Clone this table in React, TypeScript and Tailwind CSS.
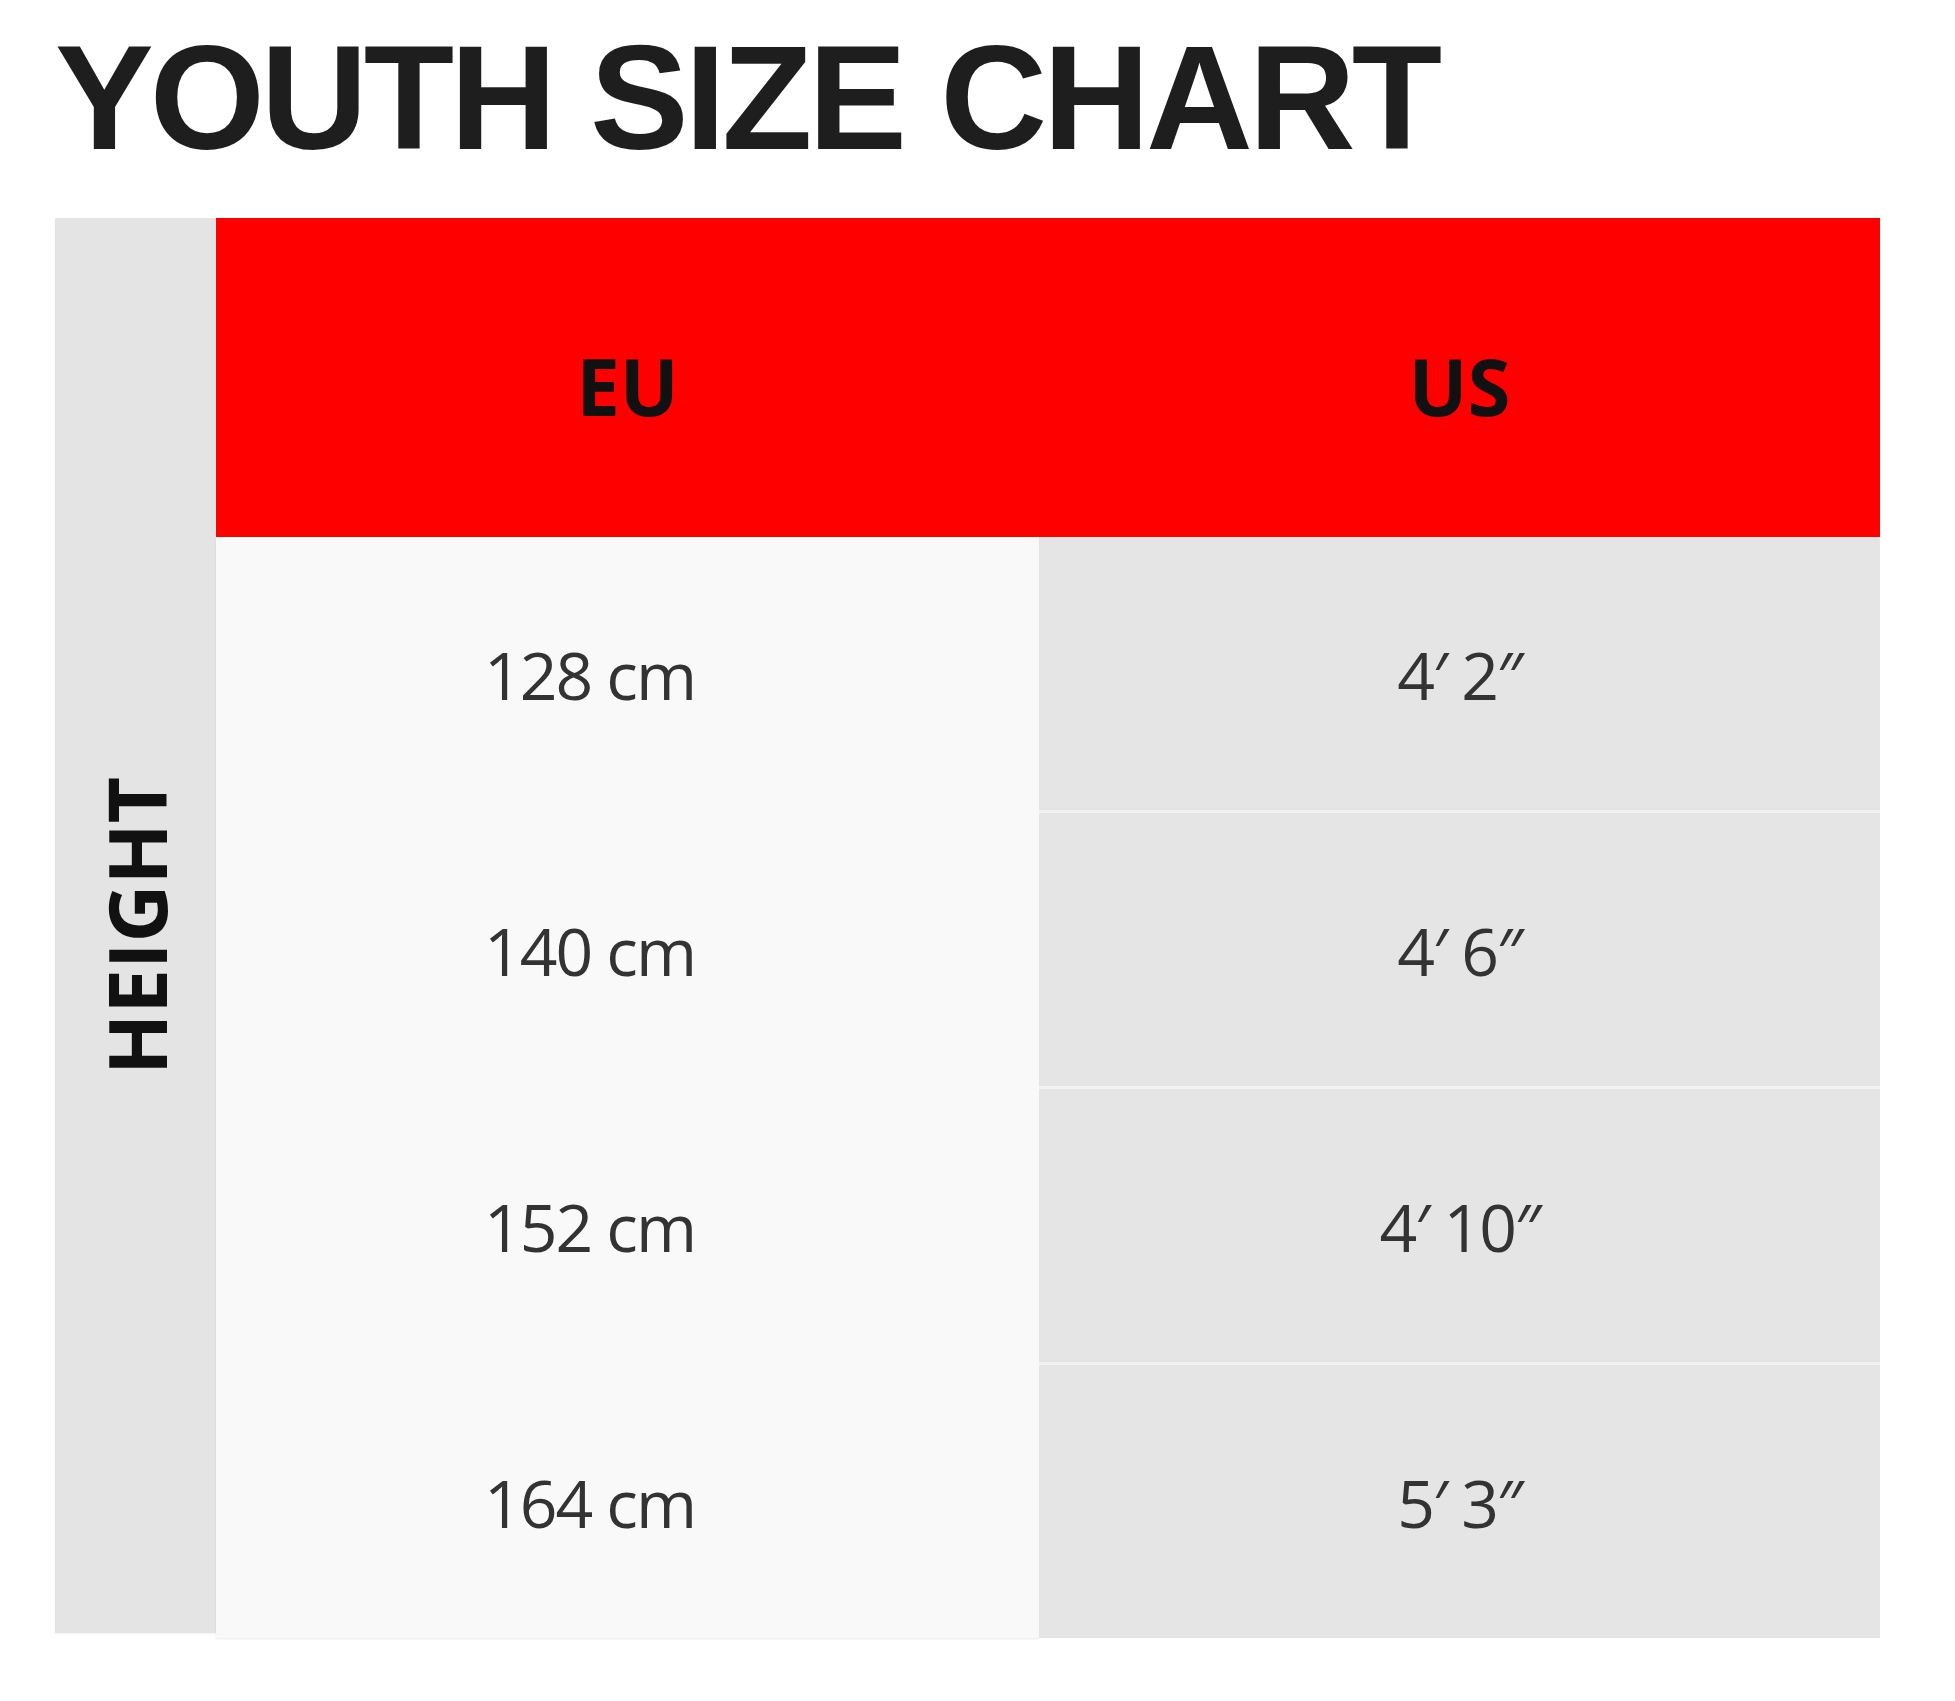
const rows = [
  { eu: "128 cm", us: "4′ 2″" },
  { eu: "140 cm", us: "4′ 6″" },
  { eu: "152 cm", us: "4′ 10″" },
  { eu: "164 cm", us: "5′ 3″" },
];

export default function App() {
  return (
    <div className="min-h-screen bg-white pt-[24px] pl-[55px]">
      <h1 className="font-['Liberation_Sans',Arial,sans-serif] text-[148px] font-bold leading-none tracking-[-4px] text-[#1e1e1e]">
        YOUTH SIZE CHART
      </h1>

      <div className="mt-[46px] flex w-[1825px] items-start font-['Open_Sans',sans-serif]">
        {/* side label */}
        <div className="flex h-[1415px] w-[161px] items-center justify-center bg-[#e4e4e4] shadow-[0_1px_2px_rgba(0,0,0,0.06)]">
          <span className="rotate-180 text-[80px] font-bold leading-none text-[#111] [writing-mode:vertical-rl]">
            HEIGHT
          </span>
        </div>

        <div className="flex flex-1 flex-col">
          {/* header */}
          <div className="grid h-[319px] grid-cols-[823px_1fr] bg-[#ff0000] text-[78px] font-bold text-[#111]">
            <div className="flex items-center justify-center pt-[18px]">EU</div>
            <div className="flex items-center justify-center pt-[18px]">US</div>
          </div>

          {/* body */}
          <div className="flex text-[66px] leading-none text-[#333]">
            <div className="flex w-[823px] flex-col gap-[3px] bg-[#f9f9f9] shadow-[0_1px_2px_rgba(0,0,0,0.08)]">
              {rows.map((r) => (
                <div key={r.eu} className="flex h-[273px] items-center justify-center pr-[76px] tracking-[-2px]">
                  {r.eu}
                </div>
              ))}
            </div>
            <div className="flex flex-1 flex-col gap-[3px] bg-[#f3f3f3]">
              {rows.map((r) => (
                <div key={r.us} className="flex h-[273px] items-center justify-center bg-[#e5e5e5] tracking-[-2px]">
                  {r.us}
                </div>
              ))}
            </div>
          </div>
        </div>
      </div>
    </div>
  );
}
